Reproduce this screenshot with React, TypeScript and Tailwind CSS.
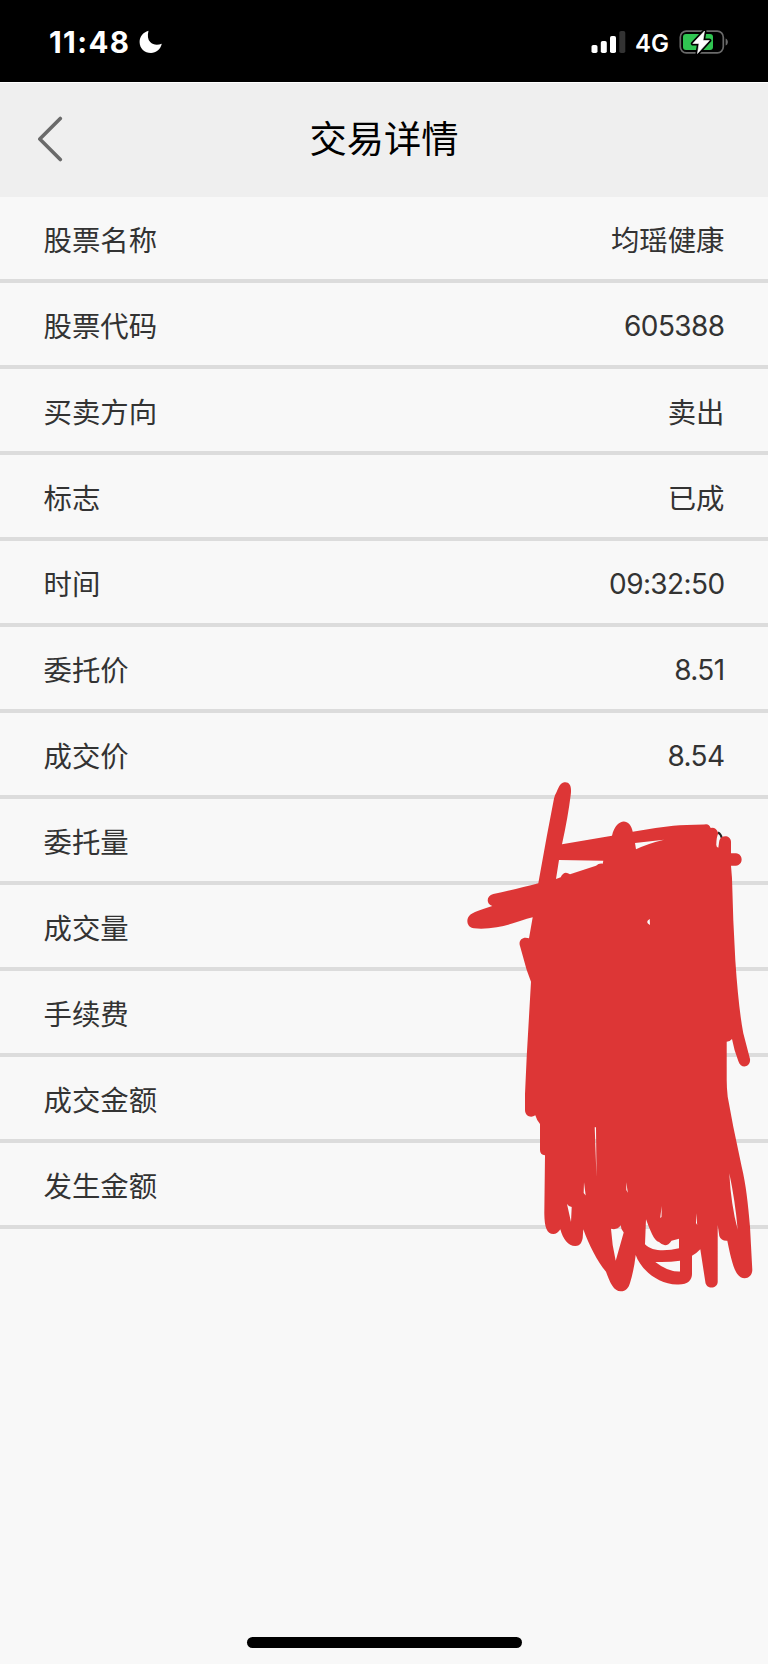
import React from 'react';

interface Row {
  label: string;
  value?: string;
}

const rows: Row[] = [
  { label: '股票名称', value: '均瑶健康' },
  { label: '股票代码', value: '605388' },
  { label: '买卖方向', value: '卖出' },
  { label: '标志', value: '已成' },
  { label: '时间', value: '09:32:50' },
  { label: '委托价', value: '8.51' },
  { label: '成交价', value: '8.54' },
  { label: '委托量' },
  { label: '成交量' },
  { label: '手续费' },
  { label: '成交金额' },
  { label: '发生金额' },
];

const isNumeric = (value: string) => /^[\d.:]+$/.test(value);

const StatusBar = () => (
  <div className="flex h-[82px] shrink-0 items-start justify-between bg-black pl-[49px] pr-[39px] text-white">
    <div className="flex items-start pt-[25px]">
      <span className="w-[90px] text-[29.500px] font-bold leading-[35px] tracking-[1.400px]">11:48</span>
      <svg width="24" height="24" viewBox="0 0 24 24" className="mt-[5px]">
        <path d="M9.500 .8C8.300 6 8.800 9.500 11.200 12C14 14.800 17.800 15.600 22.800 13.800C21.400 19.600 17 23 12 23C5.500 23 .6 18.400 .6 12C.6 7 4 2.200 9.500 .8Z" fill="#fff" />
      </svg>
    </div>
    <div className="flex items-start pt-[29px]">
      <svg width="36" height="26" viewBox="0 0 36 26">
        <rect x="1.500" y="16" width="6" height="8" rx="1.800" fill="#fff" />
        <rect x="10.800" y="12" width="6" height="12" rx="1.800" fill="#fff" />
        <rect x="20" y="7" width="6" height="17" rx="1.800" fill="#fff" />
        <rect x="29.300" y="2" width="6" height="22" rx="1.800" fill="#333" />
      </svg>
      <span className="ml-[9px] w-[43px] text-[24px] font-semibold leading-[29px]">4G</span>
      <svg width="51" height="26" viewBox="0 0 51 26">
        <rect x="2.300" y="2.200" width="43" height="21.600" rx="6" fill="none" stroke="#6a6a6a" strokeWidth="1.700" />
        <path d="M47.600 9.500C50.600 10.500 50.600 15.500 47.600 16.500Z" fill="#6a6a6a" />
        <rect x="5" y="5" width="30" height="16" rx="3" fill="#30c552" />
        <path d="M26.500 2L14.800 14.500H21L19.500 24.500L31.400 11.500H25Z" fill="#fff" stroke="#000" strokeWidth="4" strokeLinejoin="round" />
        <path d="M26.500 2L14.800 14.500H21L19.500 24.500L31.400 11.500H25Z" fill="#fff" stroke="#fff" strokeWidth=".6" strokeLinejoin="round" />
      </svg>
    </div>
  </div>
);

const Header = () => (
  <header className="grid h-[115px] shrink-0 grid-cols-[1fr_auto_1fr] items-center border-t border-white bg-[#efefef] px-[37px]">
    <button aria-label="返回" className="justify-self-start pb-[2px]">
      <svg width="28" height="46" viewBox="0 0 28 46">
        <path d="M23.300 2.500L2.800 23L23.300 43.500" fill="none" stroke="#6a6a6a" strokeWidth="3.600" strokeLinecap="round" strokeLinejoin="round" />
      </svg>
    </button>
    <h1 className="text-[37.300px] font-normal leading-none text-black">交易详情</h1>
  </header>
);

// Freehand marker drawn over the amounts
const Scribble = () => (
  <svg width="768" height="1664" viewBox="0 0 768 1664" className="pointer-events-none absolute left-0 top-0">
    <path d="M718 832.500Q721 834 721.800 838" fill="none" stroke="#222" strokeWidth="2" />
    <path
      fill="#dd3636"
      fillRule="evenodd"
      d="M564.300 782.300C560 783 558.500 788 556.700 791.700Q554.700 795 554 798.500L546.700 836.700L538.300 883.300C524 887 508 891 493.300 894C486 896 486 904 492.300 906C484 909 476 911 470.500 914.500C465 919 467 928 474 928.300C481 929 489 928.600 496.700 927.300C510 925 522 920 532.700 917.300L529 938.300C523 936 518 940 520 946L526.700 970L531 981.700L526.700 1056.700L525 1094V1110C525 1116 531 1118.500 535.300 1115.300Q537 1121 540 1124V1150Q540 1155 545 1155.300L544.300 1213.300C544.500 1228 547 1234 553.300 1234Q557.500 1234 560.300 1229.300C563 1239 568 1246 575.300 1246C581 1246 582 1241 582.700 1238L583.300 1229.300C589 1245 597 1261 606 1271.700C610 1283 614 1291.300 620.700 1291.300C626 1291.300 628.500 1288 630 1283Q634 1270 635.700 1255C640 1268 657 1284.500 677 1284.500C688 1285 692 1280 692 1274V1255.700Q696 1254 700.300 1249.300L705.300 1281.700C706 1290 717.700 1289 717.700 1281.700V1225L719.300 1236Q721 1241 727.300 1240.700C730 1254 733 1268 737.300 1274C742 1281 752.300 1279 752.300 1269.700L750 1226.700C748 1203 746 1185 741.700 1166.700L733.300 1126.700L727.700 1096.700Q726.700 1088 726.700 1080V1041.700Q730 1041.500 732 1039Q734 1050 738.300 1061C741 1070 751 1067 750 1059L743.300 1033.300Q738.500 1008 735.300 960L733.300 920L732 878.300L731 865.700H736C743.500 865 743.500 854 736 853.300H731V841.700C731 835 721 834 719.300 840.700L718.300 847.700Q716 847 716.300 844Q716.500 837 718.300 833.300Q716 827 710.700 828Q709 823 704 824.500Q685 825 673.300 825.700Q652 828 632.700 831.700C630 817 616 818 612 835.700L562 844.300Q568 817 570.700 795C572 786 569.500 781.500 564.300 782.300Z
      M559 860L603.300 860.700L602.700 863.700Q599 863 596 865.800L570 874.300Q564 870 560.700 877.300L556 879Z
      M635 843L664 839.700Q648 843.500 636 849.300Z
      M649.700 919Q644.500 922 650 925Z
      M594.700 1127.300H596L596.500 1177Z
      M584 1182.300L585.700 1195.500L583.700 1193Z
      M626.300 1182.300L627.800 1192.700L626.300 1190Z
      M567 1204Q569 1207 571.700 1207L571 1222Q569 1213 567 1204Z
      M611 1228.700Q617 1230.500 620.700 1225.300Q621 1230 623.700 1232.500L615.700 1260.700Q612 1245 611 1228.700Z
      M646 1219.300C650 1230 654 1241 659 1242Q666 1249 671.500 1240.700L679 1238.700V1248.300C667 1251 652 1252 645 1244.300Z
      M655.300 1262Q669 1262.500 680 1260.700V1271.500Q668 1272 655.300 1262Z
      M661.700 1206L661.500 1217L660.200 1218Z
      M696.300 1213.300L697.200 1225L696 1223Z
      M729.300 1173.300Q735 1200 737.700 1229.700Q731 1205 729.300 1173.300Z"
    />
  </svg>
);

export default function App() {
  return (
    <div className="relative flex h-[1664px] w-[768px] flex-col overflow-hidden bg-[#f8f8f8] font-[Inter,'Noto_Sans_CJK_SC',sans-serif]">
      <StatusBar />
      <Header />
      <ul className="flex flex-col">
        {rows.map((row) => (
          <li
            key={row.label}
            className="flex h-[86px] items-center justify-between border-b-4 border-[#dcdcdc] px-[43.500px] pt-[6px] text-[28.400px] leading-none text-[#333]"
          >
            <span>{row.label}</span>
            {row.value && (
              <span className={isNumeric(row.value) ? 'pb-[2px] text-[28px] tracking-[-0.6px]' : ''}>{row.value}</span>
            )}
          </li>
        ))}
      </ul>
      <div className="mx-auto mb-[16px] mt-auto h-[11px] w-[275px] rounded-full bg-black" />
      <Scribble />
    </div>
  );
}
